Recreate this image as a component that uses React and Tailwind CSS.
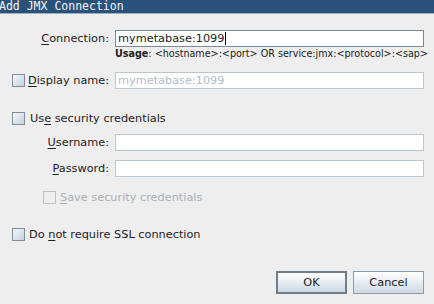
import React from 'react';

const font = { fontFamily: '"DejaVu Sans", Verdana, sans-serif' };

const Box = ({ disabled }) => (
  <span
    className={
      'inline-block w-[13px] h-[13px] shrink-0 border ' +
      (disabled
        ? 'border-[#b9c2ca] bg-[#eeeeee]'
        : 'border-[#7f8e9c] bg-gradient-to-br from-[#f6f8fb] to-[#c4d1de]')
    }
  />
);

const Label = ({ u, post }) => (
  <span className="w-[109px] shrink-0 text-right whitespace-nowrap">
    <span className="underline underline-offset-2">{u}</span>
    {post}
  </span>
);

const App = () => {
  return (
    <div className="w-[434px] h-[304px] overflow-hidden bg-[#eeeeee] text-[11.3px] text-[#222222] leading-[13px]" style={font}>
      {/* title bar */}
      <div
        className="h-[14px] bg-[#29517a] border-b border-[#9fb2c4] text-[#f2f4f7] text-[11.5px] leading-[12px] -ml-[1px] whitespace-nowrap"
        style={{ fontFamily: '"DejaVu Sans Mono", monospace' }}
      >
        Add JMX Connection
      </div>

      <div className="flex flex-col pr-[10px]">
        {/* connection */}
        <div className="flex items-center gap-[6px] mt-[16px]">
          <Label u="C" post="onnection:" />
          <div className="flex-1 h-[17px] border border-[#7b8896] bg-white flex items-center pl-[2px]">
            <span>mymetabase:1099</span>
            <span className="w-[1px] h-[13px] bg-black ml-[1px]" />
          </div>
        </div>
        <div className="ml-[115px] mt-[1px] h-[12px] text-[9.6px] leading-[12px] whitespace-nowrap">
          <span className="font-bold">Usage</span>: &lt;hostname&gt;:&lt;port&gt; OR service:jmx:&lt;protocol&gt;:&lt;sap&gt;
        </div>

        {/* display name */}
        <div className="flex items-center gap-[6px] mt-[12px]">
          <div className="w-[109px] shrink-0 flex items-center pl-[12px] whitespace-nowrap">
            <Box />
            <span className="ml-[3px] flex-1 text-right">
              <span className="underline underline-offset-2">D</span>isplay name:
            </span>
          </div>
          <div className="flex-1 h-[17px] border border-[#bcc6cf] bg-white flex items-center pl-[2px] text-[#b4bcc4]">
            mymetabase:1099
          </div>
        </div>

        {/* security */}
        <div className="flex items-center mt-[22px] pl-[12px] h-[14px]">
          <Box />
          <span className="ml-[5px]">
            Us<span className="underline underline-offset-2">e</span> security credentials
          </span>
        </div>

        <div className="flex items-center gap-[6px] mt-[9px]">
          <Label u="U" post="sername:" />
          <div className="flex-1 h-[17px] border border-[#bcc6cf] bg-white" />
        </div>
        <div className="flex items-center gap-[6px] mt-[9px]">
          <Label u="P" post="assword:" />
          <div className="flex-1 h-[17px] border border-[#bcc6cf] bg-white" />
        </div>

        <div className="flex items-center mt-[13px] pl-[43px] h-[14px] text-[#a9b1b9]">
          <Box disabled />
          <span className="ml-[4px]">
            <span className="underline underline-offset-2">S</span>ave security credentials
          </span>
        </div>

        {/* ssl */}
        <div className="flex items-center mt-[23px] pl-[12px] h-[14px]">
          <Box />
          <span className="ml-[4px]">
            Do <span className="underline underline-offset-2">n</span>ot require SSL connection
          </span>
        </div>

        {/* buttons */}
        <div className="flex justify-end gap-[6px] mt-[30px]">
          <button className="w-[71px] h-[23px] border-2 border-[#6f7e8c] bg-gradient-to-b from-[#ffffff] to-[#cfd9e4] text-[11.3px]">
            OK
          </button>
          <button className="w-[71px] h-[23px] border border-[#8d9aa7] bg-gradient-to-b from-[#ffffff] to-[#cfd9e4] text-[11.3px]">
            Cancel
          </button>
        </div>
      </div>
    </div>
  );
};

export default App;
